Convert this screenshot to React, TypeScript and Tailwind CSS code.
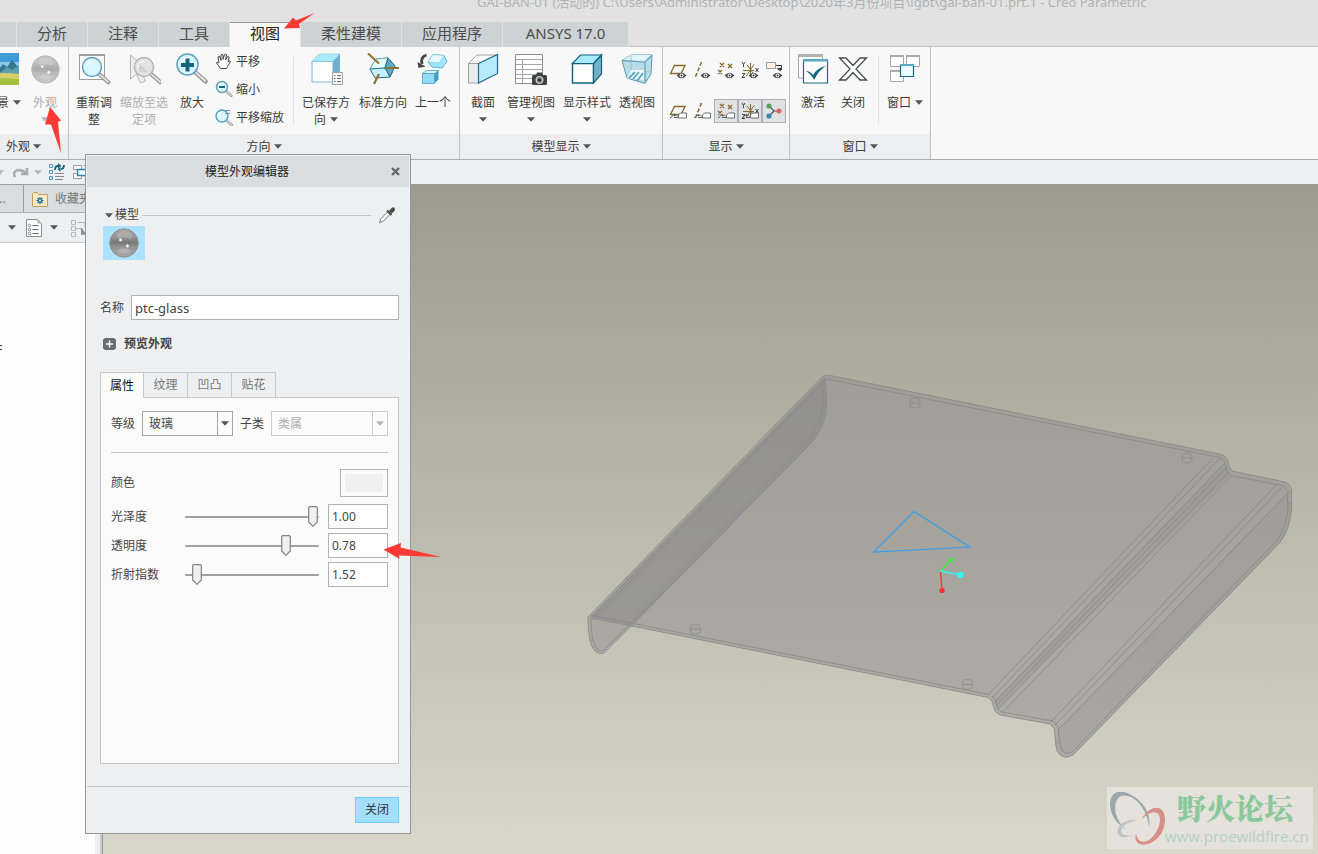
import { useState } from "react";
import type { ReactNode } from "react";

function Caret({ light = false }: { light?: boolean }) {
  return (
    <svg width="8" height="5" viewBox="0 0 8 5" className={light ? "shrink-0 text-[#b4b6b8]" : "shrink-0 text-[#555]"} aria-hidden="true">
      <path d="M0 0.300h8L4 4.800z" fill="currentColor" />
    </svg>
  );
}

function Glass({ size, id, light = false }: { size: number; id: string; light?: boolean }) {
  return (
    <svg width={size} height={size} viewBox="0 0 30 30" className={light ? "opacity-60" : ""} aria-hidden="true">
      <defs>
        <linearGradient id={id} x1="0" y1="0" x2="0" y2="1">
          <stop offset="0" stopColor="#aaaaaa" />
          <stop offset="0.28" stopColor="#969696" />
          <stop offset="0.48" stopColor="#787878" />
          <stop offset="0.66" stopColor="#969696" />
          <stop offset="1" stopColor="#acacac" />
        </linearGradient>
      </defs>
      <circle cx="15" cy="15" r="14.5" fill={`url(#${id})`} />
      <circle cx="15" cy="15" r="14" fill="none" stroke="#929292" strokeWidth="1" />
      <path d="M9 5q7-4 12 0q4 4 0 6q-6-3-11 0q-4-2-1-6z" fill="#bcbcbc" opacity=".5" />
      <path d="M8 23q7-6 14 0q-7 5-14 0z" fill="#c4c4c4" opacity=".5" />
      <circle cx="11.6" cy="12" r="1.400" fill="#fff" />
      <circle cx="18.4" cy="18" r="1.400" fill="#fff" />
    </svg>
  );
}

function Landscape() {
  return (
    <svg width="32" height="32" viewBox="0 0 32 32" aria-hidden="true">
      <path fill="#3f9bd8" d="M0 0h32v32H0z" />
      <path fill="#a9dcf2" d="M0 9h32v10H0z" opacity=".7" />
      <path fill="#35788c" d="M0 17l6-7 6 6 4-5 4 3 5-7 7 8v8H0z" />
      <path fill="#5d9fae" d="M13 20l7-6 5 3 7-5v10H13z" />
      <path fill="#d9cf6a" d="M0 21q16-2 32 0v10H0z" />
      <path fill="#a5bf3e" d="M0 25q16 0 32 1v6H0z" />
    </svg>
  );
}

function Magnifier({ x, y, r, grey = false }: { x: number; y: number; r: number; grey?: boolean }) {
  const d = r * 0.72;
  return (
    <g>
      <path d={`M${x + d} ${y + d}L${x + r * 1.72} ${y + r * 1.6}`} stroke="#8d8f91" strokeWidth={r * 0.42} strokeLinecap="round" />
      <path d={`M${x + d} ${y + d}L${x + r * 1.68} ${y + r * 1.56}`} stroke="#e3e4e5" strokeWidth={r * 0.2} strokeLinecap="round" />
      <circle cx={x} cy={y} r={r} fill={grey ? "#e3e3e3" : "#d9f5fd"} stroke={grey ? "#b3b3b3" : "#5d9db8"} strokeWidth="1.4" />
      <path d={`M${x - r * 0.6} ${y}A${r * 0.6} ${r * 0.6} 0 0 1 ${x} ${y - r * 0.6}`} stroke="#fff" strokeWidth="1.4" fill="none" />
    </g>
  );
}

function Icon({ children, size = 34 }: { children: ReactNode; size?: number }) {
  return (
    <svg width={size} height={size} viewBox={`0 0 ${size} ${size}`} fill="none" className="shrink-0" aria-hidden="true">
      {children}
    </svg>
  );
}

const RefitIcon = () => (
  <Icon>
    <path d="M2.500 2.500h25v25h-25z" fill="#fff" stroke="#9b9d9f" />
    <path d="M2 2h26v2H2z" fill="#9b9d9f" />
    <Magnifier x={15} y={15} r={9.5} />
  </Icon>
);
const ZoomSelIcon = () => (
  <Icon>
    <path d="M3.500 3v24l6-5 4 9 5-2-4-8h8z" fill="#efefef" stroke="#b3b3b3" />
    <Magnifier x={17} y={15} r={9.5} grey />
    <path d="M12 20V11l9 9z" fill="#d2d2d2" />
  </Icon>
);
const ZoomInIcon = () => (
  <Icon>
    <Magnifier x={12.5} y={12.5} r={10.500} />
    <path d="M12.500 6.500v13M6 13h13" stroke="#146482" strokeWidth="4" />
  </Icon>
);
const SavedIcon = () => (
  <Icon>
    <path d="M3 9.500h21V30H3z" fill="#fff" stroke="#74bcd8" />
    <path d="M3 9.500L10 2h21l-7 7.500z" fill="#a9eaff" stroke="#7cc4df" strokeWidth=".6" />
    <path d="M24 9.500L31 2v20l-7 8z" fill="#6fb0ca" />
    <path d="M23.500 20.500h10v12h-10z" fill="#fff" stroke="#a0a2a4" />
    <path d="M25 23.500h1.500M25 26.500h1.500M25 29.500h1.500M28 23.500h4M28 26.500h4M28 29.500h4" stroke="#666" />
  </Icon>
);
const StandardIcon = () => (
  <Icon>
    <path d="M4 17l6-10 12-1 7 8-5 11-15 1z" fill="#c4f1fd" stroke="#1d6c8c" />
    <path d="M10 7l12-1-3 10-15 1z" fill="#e8fbff" stroke="#5aa9c5" strokeWidth=".7" />
    <path d="M22 6l7 8-5 11-5-9z" fill="#5fa9c5" stroke="#1d6c8c" strokeWidth=".7" />
    <path d="M4 17l15-1 5 9M19 16l3-10" stroke="#1d6c8c" strokeWidth=".8" />
    <path d="M2 1.500l11 10M20 16h13M13 22l-5 10" stroke="#937235" strokeWidth="2.200" />
  </Icon>
);
const PreviousIcon = () => (
  <Icon>
    <path d="M12 10l5-7.500 11 1 3 6-5 6.500-10-1z" fill="#9fe8ff" stroke="#4aa1bf" strokeWidth=".8" />
    <path d="M12 10l5-7.500 11 1-5 7.500z" fill="#e8faff" stroke="#7cc4df" strokeWidth=".6" />
    <path d="M6.500 21.500h12v10h-12z" fill="#8fdcf8" stroke="#4a9dbb" strokeWidth=".8" />
    <path d="M6.500 21.500l4-3h12l-4 3z" fill="#d5f6ff" stroke="#4a9dbb" strokeWidth=".8" />
    <path d="M18.500 21.500l4-3v9l-4 4z" fill="#429fc0" />
    <path d="M10.500 3C6 4 5 8 6 12" stroke="#444" strokeWidth="2.800" />
    <path d="M1.500 10l1 6 7-1.500z" fill="#444" />
  </Icon>
);
const SectionIcon = () => (
  <Icon>
    <path d="M2.500 11.500h10V31h-10z" fill="#eaebec" stroke="#a0a2a4" />
    <path d="M2.500 11.500L11 3h20l-18.500 8.500z" fill="#fff" stroke="#a0a2a4" />
    <path d="M12.500 11.500L31.500 2.500v19L12.500 31z" fill="#b5ebfc" stroke="#1d6c8c" strokeWidth="1.200" />
  </Icon>
);
const ManageIcon = () => (
  <Icon>
    <path d="M1.500 2.500h27v29h-27z" fill="#fdfdfd" stroke="#8b8d8f" />
    <path d="M2 7.500h26M2 12.500h26M2 17.500h26M2 22.500h26M2 26.500h26M8.500 7v24" stroke="#a4a6a8" />
    <rect x="18" y="23" width="15" height="10" rx="1.500" fill="#3f4042" />
    <path d="M22 23l1-2.500h5l1 2.500z" fill="#3f4042" />
    <circle cx="25.500" cy="28" r="3.600" fill="#888" stroke="#ddd" />
    <circle cx="25.500" cy="28" r="1.600" fill="#222" />
  </Icon>
);
const StyleIcon = () => (
  <Icon>
    <path d="M2.500 11.500h21V31h-21z" fill="#fff" stroke="#11627f" strokeWidth="1.400" />
    <path d="M2.500 11.500L10.500 3h21l-8 8.500z" fill="#a9eaff" stroke="#11627f" strokeWidth="1.200" />
    <path d="M23.500 11.500l8-8.500v19l-8 9z" fill="#74b1c9" stroke="#11627f" strokeWidth="1.200" />
  </Icon>
);
const PerspectiveIcon = () => (
  <Icon>
    <path d="M2 8.500L11 3h21l-1 19-6 9.500L7 26z" fill="#b8dde9" stroke="#5c98ae" />
    <path d="M2 8.500L11 3h21l-7 7z" fill="#e0f6fc" />
    <path d="M11 4v14l-4 8M11 18l20 2" stroke="#8fbccb" strokeWidth=".8" />
    <path d="M11 18h13v10l-17-2z" fill="#eef9fc" />
    <path d="M15 20l-6 6M19 20l-6 7M23 21l-6 8" stroke="#5fa5bf" strokeWidth="1.800" />
    <path d="M2 8.500l23 1.500v21M25 10l7-7" stroke="#6ba4b9" strokeWidth="1.300" />
  </Icon>
);
const ActivateIcon = () => (
  <Icon>
    <path d="M2.500 3h24v23h-24z" fill="#fff" stroke="#a0a2a4" />
    <path d="M2 2h25v3H2z" fill="#b0b2b4" />
    <path d="M7.500 8h24v23h-24z" fill="#fff" stroke="#1a6886" strokeWidth="1.200" />
    <path d="M7 7h25v2.500H7z" fill="#5ba8c6" />
    <path d="M10 19q4 0 7 4q4-7 13-9q-7 4-12 14q-2-5-8-9z" fill="#146482" />
  </Icon>
);
const CloseWindowIcon = () => (
  <Icon>
    <path d="M3.500 6H10l7 7.500L24 6h6.500L20 17l10.500 11H24l-7-7.500L10 28H3.500L14 17z" fill="#fff" stroke="#494b4d" strokeWidth="1.300" />
  </Icon>
);
const WindowsIcon = () => (
  <Icon>
    <path d="M2.500 3.500h13v11h-13zM18.500 3.500h13v11h-13zM2.500 18.500h13v11h-13z" fill="#fff" stroke="#a4a6a8" />
    <path d="M2 3h14v2H2zM18 3h14v2H18zM2 18h14v2H2z" fill="#a9abad" />
    <path d="M12.500 12.500h13v12h-13z" fill="#eef9fd" stroke="#17627e" strokeWidth="1.200" />
    <path d="M12 12h14v2H12z" fill="#5ba8c6" />
  </Icon>
);

type BigProps = { icon: ReactNode; lines: string[]; caret?: "inline" | "below"; muted?: boolean; className: string };
function BigButton({ icon, lines, caret, muted = false, className }: BigProps) {
  return (
    <button type="button" disabled={muted} className={`flex shrink-0 flex-col items-center pt-1 whitespace-nowrap ${muted ? "text-[#acaeb0]" : "text-[#3c3c3c]"} ${className}`}>
      <span className="mb-[7px] flex h-9 items-center justify-center">{icon}</span>
      {lines.map((line, i) => (
        <span key={line} className="flex items-center justify-center gap-1">
          {line}
          {caret === "inline" && i === lines.length - 1 && <Caret />}
        </span>
      ))}
      {caret === "below" && (
        <span className="flex h-4 items-center">
          <Caret light={muted} />
        </span>
      )}
    </button>
  );
}

function Group({ label, className, labelClass = "justify-center", children }: { label: string; className: string; labelClass?: string; children: ReactNode }) {
  return (
    <section aria-label={label} className={`flex shrink-0 flex-col overflow-hidden border-r border-[#bfc1c3] ${className}`}>
      <div className="flex h-[87px]">{children}</div>
      <button type="button" className={`flex h-[25px] w-full items-center gap-[3px] bg-[#eceef0] text-[#3c3c3c] ${labelClass}`}>
        {label}
        <Caret />
      </button>
    </section>
  );
}

function Divider() {
  return <span className="mt-2.5 h-[67px] w-px shrink-0 bg-[#e0e2e4]" />;
}

const Eye = () => (
  <g>
    <path d="M10.500 17.500q5-5.500 10 0q-5 5.500-10 0z" fill="#4a4c4e" />
    <circle cx="15.500" cy="17.500" r="1.900" fill="#fff" />
    <circle cx="15.500" cy="17.500" r="1" fill="#333" />
  </g>
);
const Tag = () => (
  <g>
    <path d="M12.500 16l2-2h6v5h-8z" fill="#fff" stroke="#6a6c6e" />
    <path d="M4 19q2-1 3.500-3t1 1q2-2 3 0M8 18.500h4" stroke="#5a5c5e" />
  </g>
);
const planeMark = <path d="M4.500 15.500L8.500 7.500H19L15 15.500z" stroke="#86682c" strokeWidth="1.300" />;
const axisMark = <path d="M11.500 4L5 20" stroke="#86682c" strokeWidth="1.500" strokeDasharray="4 2" />;
const pointMark = <path d="M6 5l4 4M10 5l-4 4M14 6l4 4M18 6l-4 4M4 12l4 4M8 12l-4 4" stroke="#86682c" strokeWidth="1.400" />;
const csysMark = (
  <g>
    <path d="M12.500 5v14M5 12.500h11M8 18.500L16 6.500M9 7l6 8" stroke="#86682c" />
    <path d="M4 4l1.500 2.500L7 4M5.500 6.500V9M4 15.500h3L4 19.500h3M17.500 10l3 4M20.500 10l-3 4" stroke="#3c3e40" />
  </g>
);
const showTools: { name: string; on: boolean; mark: ReactNode }[] = [
  { name: "平面显示", on: false, mark: <>{planeMark}<Eye /></> },
  { name: "轴显示", on: false, mark: <>{axisMark}<Eye /></> },
  { name: "点显示", on: false, mark: <>{pointMark}<Eye /></> },
  { name: "坐标系显示", on: false, mark: <>{csysMark}<Eye /></> },
  { name: "注释显示", on: false, mark: <><path d="M4.500 4.500h9v6h-9z" fill="#fff3dc" stroke="#999b9d" /><path d="M14 7.500h5.500V12M16 11.500h3.500" stroke="#333" /><path d="M14.500 10.500l4 3 1-4z" fill="#444" /><Eye /></> },
  { name: "平面标记显示", on: false, mark: <>{planeMark}<Tag /></> },
  { name: "轴标记显示", on: false, mark: <>{axisMark}<Tag /></> },
  { name: "点标记显示", on: true, mark: <>{pointMark}<Tag /></> },
  { name: "坐标系标记显示", on: true, mark: <>{csysMark}<Tag /></> },
  { name: "旋转中心", on: true, mark: <><path d="M7 7l5 5h6M12 12l-5 5" stroke="#555" strokeWidth="1.200" /><circle cx="7" cy="7" r="2.600" fill="#5f9f5a" /><circle cx="17" cy="12" r="2.600" fill="#d66b64" /><circle cx="7" cy="17" r="2.600" fill="#3f88ab" /></> },
];

function Ribbon() {
  return (
    <div className="flex border-b border-[#a9abad] bg-[#f8f8f8] leading-[17px]">
      <Group label="外观" className="w-[69px]" labelClass="pl-1.5">
        <button type="button" className="flex w-[21px] shrink-0 flex-col items-end pt-1 text-[#3c3c3c]">
          <span className="mr-0.5 mb-[7px] flex h-9 items-center"><Landscape /></span>
          <span className="flex items-center gap-1 whitespace-nowrap">场景<Caret /></span>
        </button>
        <BigButton className="w-12" icon={<Glass size={29} id="ribbon-glass" light />} lines={["外观"]} caret="below" muted />
      </Group>
      <Group label="方向" className="w-[391px]">
        <BigButton className="w-[50px]" icon={<RefitIcon />} lines={["重新调", "整"]} />
        <BigButton className="w-[50px]" icon={<ZoomSelIcon />} lines={["缩放至选", "定项"]} muted />
        <BigButton className="w-[46px]" icon={<ZoomInIcon />} lines={["放大"]} />
        <div className="flex w-[78px] shrink-0 flex-col gap-2.5 pt-[5px] text-[#3c3c3c]">
          <button type="button" className="flex items-center gap-[3px]">
            <Icon size={18}>
              <path d="M5.500 16.500q-2-3-4-5.500 0-2 2.500 0L3 5q1-1.500 2 0l1 3.500V3q1-1.500 2 0v4.500L9.500 2.500q1.500-1 2 0L10.500 8l2-3.500q1.500-.5 1.500 1L13 10q2-2 2.500-.5l-3 5-1 2z" fill="#fff" stroke="#444" />
            </Icon>
            平移
          </button>
          <button type="button" className="flex items-center gap-[3px]">
            <Icon size={18}><Magnifier x={7} y={7} r={5.500} /><path d="M4 7h6" stroke="#146482" strokeWidth="2" /></Icon>
            缩小
          </button>
          <button type="button" className="flex items-center gap-[3px]">
            <Icon size={18}><Magnifier x={7} y={8} r={6} /><path d="M9 2.500h6M10 5.500h5" stroke="#5d9db8" /></Icon>
            平移缩放
          </button>
        </div>
        <Divider />
        <BigButton className="w-16" icon={<SavedIcon />} lines={["已保存方", "向"]} caret="inline" />
        <BigButton className="w-[50px]" icon={<StandardIcon />} lines={["标准方向"]} />
        <BigButton className="w-[50px]" icon={<PreviousIcon />} lines={["上一个"]} />
      </Group>
      <Group label="模型显示" className="w-[203px]">
        <BigButton className="w-[46px]" icon={<SectionIcon />} lines={["截面"]} caret="below" />
        <BigButton className="w-[50px]" icon={<ManageIcon />} lines={["管理视图"]} caret="below" />
        <BigButton className="w-[62px]" icon={<StyleIcon />} lines={["显示样式"]} caret="below" />
        <BigButton className="w-[38px]" icon={<PerspectiveIcon />} lines={["透视图"]} />
      </Group>
      <Group label="显示" className="w-[127px]">
        <div className="grid grid-cols-5 content-start gap-y-[17px] px-[3px] pt-[11px]">
          {showTools.map((t) => (
            <button key={t.name} type="button" aria-label={t.name} aria-pressed={t.on} className={`flex size-6 items-center justify-center border ${t.on ? "border-[#aeb0b2] bg-[#dfe1e4]" : "border-transparent"}`}>
              <Icon size={24}>{t.mark}</Icon>
            </button>
          ))}
        </div>
      </Group>
      <Group label="窗口" className="w-[141px]">
        <BigButton className="w-[46px]" icon={<ActivateIcon />} lines={["激活"]} />
        <BigButton className="mr-2 w-[34px]" icon={<CloseWindowIcon />} lines={["关闭"]} />
        <Divider />
        <BigButton className="w-[52px]" icon={<WindowsIcon />} lines={["窗口"]} caret="inline" />
      </Group>
    </div>
  );
}

const ribbonTabs: [string, string][] = [
  ["分析", "w-[70px]"],
  ["注释", "w-[70px]"],
  ["工具", "w-[70px]"],
  ["视图", "w-[70px]"],
  ["柔性建模", "w-[100px]"],
  ["应用程序", "w-[100px]"],
  ["ANSYS 17.0", "w-[125px]"],
];

function TabStrip() {
  return (
    <nav aria-label="功能区" className="flex h-[25px] gap-px text-[15px] leading-5">
      <span className="w-4 bg-[#cdd2d5]" />
      {ribbonTabs.map(([name, width]) => (
        <button key={name} type="button" className={`shrink-0 pb-1 ${width} ${name === "视图" ? "border-t border-[#999] bg-[#f8f8f8] text-[#222]" : "bg-[#cdd2d5] text-[#4c4c4c]"}`}>
          {name}
        </button>
      ))}
      <span className="flex-1 border-b border-[#bfc1c3]" />
    </nav>
  );
}

const BranchIcon = () => (
  <Icon size={18}>
    <path d="M1.500 1.500h4v4h-4zM1.500 7.500h4v4h-4zM1.500 13.500h4v4h-4zM8 3.500h7v5M6 9.500h6v6" stroke="#b4b6b8" />
    <path d="M11 10l6 7M12 10v5l5-1" stroke="#888" strokeWidth="1.500" />
  </Icon>
);

function QuickBar() {
  return (
    <div className="flex h-6 shrink-0 items-center overflow-hidden bg-[#eeeff1]">
      <span className="-ml-1"><Caret light /></span>
      <button type="button" aria-label="重做" className="ml-2">
        <Icon size={18}><path d="M3 14q-3-6 4-7 4 0 7 3M15 5v6H9" stroke="#a9abad" strokeWidth="2.500" /></Icon>
      </button>
      <span className="ml-1"><Caret light /></span>
      <button type="button" aria-label="重新生成" className="ml-1.5">
        <Icon size={18}>
          <path d="M1.500 1.500h3v3h-3zM1.500 7.500h3v3h-3zM1.500 13.500h3v3h-3z" stroke="#4a98b6" />
          <path d="M7 10.500h9M7 13.500h9M7 16.500h8" stroke="#888" />
          <path d="M7 7q0-4 3-4M16 2q0 4-3 4" stroke="#146482" strokeWidth="1.800" /><path d="M10 0l3.500 3-3.500 3zM12.500 3.500L9.500 6l3 3z" fill="#146482" />
        </Icon>
      </button>
      <button type="button" aria-label="窗口" className="ml-1.5">
        <Icon size={18}>
          <path d="M1.500 2.500h8v4h-8zM1.500 10.500h8v5h-8zM11.500 2.500h6v4" fill="#fff" stroke="#999b9d" />
          <path d="M5.500 6.500h12v6h-12z" fill="#eef9fd" stroke="#3384a2" strokeWidth="1.300" />
        </Icon>
      </button>
    </div>
  );
}

function Sidebar() {
  return (
    <aside className="flex w-[103px] shrink-0 flex-col border-t border-r border-[#999b9d] bg-[#c9cbcc] pr-0.5">
      <div className="flex h-7 shrink-0 overflow-hidden border-b border-[#aeb0b2] bg-[#d9dddf] text-[#777]">
        <span className="flex w-6 shrink-0 items-center border-r border-[#999b9d]"><span className="-ml-1">...</span></span>
        <button type="button" className="flex shrink-0 items-center gap-1.5 pl-[7px]">
          <Icon size={18}>
            <path d="M1.500 3.500l1-1h4l1 2h9v12h-15z" fill="#fbeacb" stroke="#c99f56" />
            <path d="M9 7v7M5.500 10.500h7M6.500 8l5 5M11.500 8l-5 5" stroke="#146482" strokeWidth="1.200" />
            <circle cx="9" cy="10.500" r="1" fill="#fff" />
          </Icon>
          收藏夹
        </button>
      </div>
      <div className="flex h-[30px] shrink-0 items-center overflow-hidden border-b border-[#c4c6c8] bg-[#eeeff1] pl-2">
        <Caret />
        <button type="button" aria-label="显示设置" className="ml-2">
          <Icon size={20}>
            <path d="M2.500 1.500h11l4 4v13h-15z" fill="#fbfcfc" stroke="#8b8d8f" />
            <path d="M13.500 1.500v4h4z" fill="#b4b6b8" />
            <path d="M8.500 7.500h6M8.500 11.500h6M8.500 15.500h6" stroke="#666" />
            <circle cx="5.500" cy="7.500" r="1.300" stroke="#8b8d8f" /><circle cx="5.500" cy="11.500" r="1.300" stroke="#8b8d8f" /><circle cx="5.500" cy="15.500" r="1.300" stroke="#8b8d8f" />
          </Icon>
        </button>
        <span className="ml-1.5"><Caret /></span>
        <span className="ml-3"><BranchIcon /></span>
      </div>
      <div className="flex-1 border-r-[5px] border-[#eceef0] bg-[#fdfdfd] pt-[98px] text-[#333]">
        <span className="block w-1 overflow-hidden"><span className="-ml-1 block">F</span></span>
      </div>
    </aside>
  );
}

function Screw({ x, y }: { x: number; y: number }) {
  return (
    <path d={`M${x - 5} ${y}v-2a5 3 0 0 1 10 0v4a5 3 0 0 1-10 0zM${x - 5} ${y}h10`} strokeWidth=".9" />
  );
}

function Viewport() {
  return (
    <main className="relative flex-1 overflow-hidden bg-linear-to-b from-[#9d9b8d] to-[#d9d7ca]">
      <svg viewBox="103 184 1215 670" preserveAspectRatio="xMidYMid slice" className="absolute inset-0 size-full" fill="none" role="img" aria-label="GAI-BAN-01">
        <path d="M588 617L823 376l5-1 394 79.500q5 2 6 7t4 9.500l53 11q6 2 6.500 8V510q-2 20-12 33L1073 755q-10 6-16-4-2-8-2.500-22l-4-5-50-9q-7-2-8-13l-4-4.500L632 626l-29 27q-9 3-13-11z" fill="#929290" fillOpacity=".56" />
        <path d="M590 617L825 378l1.700 25q-1 22-15 40L632 626z" fill="#74747a" fillOpacity=".3" />
        <path d="M1290 490l1.700 20q-2 20-12 33L1073 755q-10 6-16-4l1-21z" fill="#7a7a78" fillOpacity=".1" />
        <path d="M1225 462L994 701l3 9 234-236z" fill="#707070" fillOpacity=".1" />
        <g stroke="#88888c" strokeWidth="1" strokeOpacity=".85">
          <path d="M588 617L823 376l5-1 394 79.500q5 2 6 7t4 9.500l53 11q6 2 6.500 8V510q-2 20-12 33L1073 755q-10 6-16-4-2-8-2.500-22l-4-5-50-9q-7-2-8-13l-4-4.500L592 618" />
          <path d="M588 617q0 18 3 27 5 12 13 9L811 443q15-16 15.700-40L825 377" />
          <path d="M591 619q0 18 4 27 4 7 9 4L809 440q13-16 14-39l-1-22" />
          <path d="M590 619L823 379M593 620L825 380M591 615L990 694.700M827 379L1220 457.500q5 2 5 8t6 10l51 10q5 2 5 8l1 16q-2 18-11 31L1073 751q-8 6-12-3-2-8-3-22l-5-5-51-9q-6-2-6-11l-4-5" />
          <path d="M1213 458L988 695M1220 458L993 697M1225 463L995 702M1227 467L996 706M1228 473L998 709M1232 475L1002 713" />
          <path d="M1278 483L1051 722M1283 486L1055 725M1290 491L1058 730M1287 503h5M590 640h3M823 400h4M1055 742h3" />
          <Screw x={915} y={403} />
          <Screw x={695.500} y={629} />
          <Screw x={1187} y={458} />
          <Screw x={967.500} y={684.500} />
        </g>
        <path d="M914 511.500L970 547L873.500 552z" stroke="#379ff0" strokeWidth="1.200" />
        <path d="M940.500 571L951 560" stroke="#35f235" strokeWidth="1.300" />
        <circle cx="951" cy="560" r="2.300" fill="#35f235" />
        <path d="M940.500 571L960.500 575" stroke="#35f5f5" strokeWidth="1.300" />
        <circle cx="960.500" cy="575" r="3.200" fill="#35f5f5" />
        <path d="M940.500 572L942 590" stroke="#f03535" strokeWidth="1.300" />
        <circle cx="942" cy="590.500" r="2.600" fill="#f53030" />
      </svg>
      <div className="absolute right-[5px] bottom-[5px] flex h-[62px] w-[206px] bg-[#e4e2da]">
        <svg width="60" height="62" viewBox="0 0 60 62" fill="none" className="shrink-0" aria-hidden="true">
          <path d="M42 40C46 20 24 3 11 5C-3 8 2 36 21 43C9 38 3 15 14 9C25 5 41 21 42 40z" fill="#9ba8ab" />
          <path d="M35 32C42 18 58 16 58 33C58 50 41 62 31 56Q27 52 29 47Q31 57 40 54C51 49 57 30 50 26Q44 23 35 32z" fill="#d88f89" />
          <path d="M31 34C22 30 8 38 11 47Q14 53 26 48Q15 50 14 44Q17 34 31 34z" fill="#bfc3c2" />
        </svg>
        <div className="-ml-0.5 flex flex-col whitespace-nowrap">
          <span className="pl-3 font-['Noto_Serif_CJK_SC','Noto_Sans_CJK_SC',sans-serif] text-[29px] leading-[41px] font-black text-[#8bc79c]">野火论坛</span>
          <span className="font-['Open_Sans',sans-serif] text-[15px] leading-4 text-[#b3d0c8]">www.proewildfire.cn</span>
        </div>
      </div>
    </main>
  );
}

type SliderRowProps = { id: string; label: string; initial: number; min: number; max: number };
function SliderRow({ id, label, initial, min, max }: SliderRowProps) {
  const [value, setValue] = useState(initial);
  const ratio = (value - min) / (max - min);
  return (
    <div className="flex h-[25px] items-center">
      <label htmlFor={id} className="w-[74px]">{label}</label>
      <div className="relative mr-[9px] flex h-[21px] flex-1 items-center">
        <span className="h-0.5 w-full rounded-full bg-[#a0a1a3]" />
        <input id={id} type="range" min={min} max={max} step={0.01} value={value} onChange={(e) => setValue(Number(e.target.value))} className="absolute inset-0 w-full cursor-pointer opacity-0" />
        <svg width="10" height="21" viewBox="0 0 10 21" className="pointer-events-none absolute top-0" style={{ left: `${ratio * 92}%` }} aria-hidden="true">
          <path d="M1.500.7h7l.8.800v14.500L5 20.300.7 16V1.500z" fill="#f0f0f0" stroke="#7f8183" strokeWidth="1.200" />
        </svg>
      </div>
      <input aria-label={`${label}数值`} value={value.toFixed(2)} onChange={(e) => setValue(Number(e.target.value) || min)} className="h-[25px] w-[60px] border border-[#b0b2b4] bg-white px-[3px] text-[#444] outline-none" />
    </div>
  );
}

function AppearanceDialog() {
  return (
    <div role="dialog" aria-labelledby="dlg-title" className="absolute top-[154px] left-[85px] flex w-[326px] flex-col border border-[#949698] bg-[#eeeff1] leading-4 text-[#444]">
      <header className="m-px flex h-[31px] items-center bg-[#d9dddf] pr-1.5">
        <h2 id="dlg-title" className="flex-1 pl-5 text-center text-[#222]">模型外观编辑器</h2>
        <button type="button" aria-label="关闭" className="flex size-4 items-center justify-center">
          <svg width="9" height="9" viewBox="0 0 9 9" aria-hidden="true"><path d="M1 1l7 7M8 1L1 8" stroke="#66686a" strokeWidth="2.400" /></svg>
        </button>
      </header>
      <div className="flex flex-col pr-[11px] pb-[22px] pl-[14px]">
        <div className="mt-[15px] mb-[-1px] flex h-6 items-center pr-[3px] pl-[5px]">
          <Caret />
          <span className="pl-0.5">模型</span>
          <span className="mx-[3px] h-px flex-1 bg-[#c2c4c6]" />
          <button type="button" aria-label="选取外观" className="ml-1">
            <Icon size={18}>
              <path d="M1.500 16.500l1.500-4 6.500-6.500 2.500 2.500L5.500 15z" fill="#fff" stroke="#777" />
              <path d="M9 4.500L13.500 9" stroke="#444" strokeWidth="1.800" />
              <path d="M11 5l2.500-3q2-1.500 3 0t0 3L13.500 7.500z" fill="#4a4a4c" />
            </Icon>
          </button>
        </div>
        <button type="button" aria-label="ptc-glass" className="ml-[3px] flex h-[34px] w-[42px] items-center justify-center bg-[#abe2ff]">
          <Glass size={30} id="dialog-glass" />
        </button>
        <div className="mt-[35px] flex items-center">
          <label htmlFor="name" className="w-[31px]">名称</label>
          <input id="name" defaultValue="ptc-glass" className="h-[25px] min-w-0 flex-1 border border-[#b0b2b4] bg-white px-[3px] text-[13px] text-[#444] outline-none" />
        </div>
        <button type="button" className="mt-4 flex items-center gap-2 self-start pl-[3px] font-bold">
          <svg width="13" height="12" viewBox="0 0 13 12" aria-hidden="true">
            <rect width="13" height="12" rx="3" fill="#6b6c72" /><path d="M6.500 2.500v7M3 6h7" stroke="#fff" strokeWidth="1.400" />
          </svg>
          预览外观
        </button>
        <div role="tablist" className="relative z-10 mt-5 -mb-px flex h-[26px]">
          {["属性", "纹理", "凹凸", "贴花"].map((t, i) => (
            <button key={t} type="button" role="tab" aria-selected={i === 0} className={`w-11 border-t border-r border-[#c6c8ca] ${i === 0 ? "border-l bg-[#fbfbfb] text-[#111]" : "border-b bg-[#eeeff1] text-[#777]"}`}>
              {t}
            </button>
          ))}
        </div>
        <div role="tabpanel" className="flex min-h-[367px] flex-col border border-[#c2c4c6] bg-[#fbfbfb] px-2.5 pt-[13px]">
          <div className="flex items-center">
            <label htmlFor="class" className="w-[31px]">等级</label>
            <span className="relative flex w-[91px]">
              <select id="class" className="h-[25px] w-full appearance-none border border-[#a4a6a8] bg-[#fbfbfb] px-1.5 outline-none"><option>玻璃</option></select>
              <span className="pointer-events-none absolute inset-y-0 right-0 flex w-4 items-center justify-center border-l border-[#a4a6a8] pr-0.5"><Caret /></span>
            </span>
            <label htmlFor="subclass" className="w-[38px] pl-[7px]">子类</label>
            <span className="relative flex flex-1">
              <select id="subclass" disabled className="h-[25px] w-full appearance-none border border-[#c9cbcd] bg-[#fbfbfb] px-1.5 text-[#aeb0b2] opacity-100 outline-none"><option>类属</option></select>
              <span className="pointer-events-none absolute inset-y-0 right-0 flex w-4 items-center justify-center border-l border-[#c9cbcd] pr-0.5"><Caret light /></span>
            </span>
          </div>
          <hr className="my-4 border-[#c2c4c6]" />
          <div className="mb-[7px] flex items-center justify-between">
            <span>颜色</span>
            <button type="button" aria-label="颜色" className="h-7 w-12 border border-[#b0b2b4] bg-[#fbfbfb] p-1"><span className="block size-full bg-[#f0f0f0]" /></button>
          </div>
          <div className="flex flex-col gap-1">
            <SliderRow id="gloss" label="光泽度" initial={1} min={0} max={1} />
            <SliderRow id="transparency" label="透明度" initial={0.78} min={0} max={1} />
            <SliderRow id="refraction" label="折射指数" initial={1.52} min={1.4} max={3.6} />
          </div>
        </div>
      </div>
      <footer className="mx-px flex justify-end border-t border-[#c2c4c6] py-2.5 pr-2.5">
        <button type="button" className="h-[26px] w-11 border border-[#6fcaff] bg-[#a3e0ff] text-[#333]">关闭</button>
      </footer>
    </div>
  );
}

export default function App() {
  return (
    <div lang="zh-CN" className="relative flex min-h-screen flex-col overflow-hidden bg-[#e2e2e2] font-['Noto_Sans','Noto_Sans_CJK_SC',sans-serif] text-[12px]">
      <header className="h-[22px] shrink-0 overflow-hidden pl-[477px]">
        <h1 className="-mt-2 text-[13px] leading-5 whitespace-nowrap text-[#b0b2b4]">
          GAI-BAN-01 (活动的) C:\Users\Administrator\Desktop\2020年3月份项目\igbt\gai-ban-01.prt.1 - Creo Parametric
        </h1>
      </header>
      <TabStrip />
      <Ribbon />
      <QuickBar />
      <div className="flex flex-1">
        <Sidebar />
        <Viewport />
      </div>
      <AppearanceDialog />
      <svg width="32" height="18" viewBox="283 12 32 18" className="pointer-events-none absolute top-3 left-[283px]" aria-hidden="true">
        <path d="M284 28.500L293 17.500L296 20.500L314.500 13L299 24L300 28z" fill="#fb3a36" />
      </svg>
      <svg width="18" height="48" viewBox="44 106 18 48" className="pointer-events-none absolute top-[106px] left-11" aria-hidden="true">
        <path d="M50 107L61 120.500L58 122L61 153L51 124.500L45 124.500z" fill="#fb3a36" />
      </svg>
      <svg width="60" height="18" viewBox="383 542 60 18" className="pointer-events-none absolute top-[542px] left-[383px]" aria-hidden="true">
        <path d="M383.500 549.500L401 543L400.500 547.500L441 557L399 555.500L399.500 559z" fill="#fb3a36" />
      </svg>
    </div>
  );
}
